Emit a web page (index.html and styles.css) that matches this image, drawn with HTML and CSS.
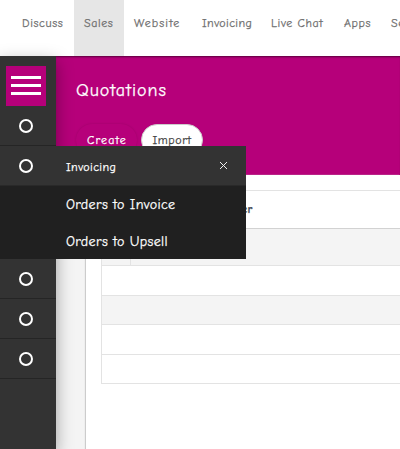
FILE: index.html
```
<!DOCTYPE html>
<html lang="en">
<head>
<meta charset="utf-8">
<title>Quotations</title>
<link rel="stylesheet" href="styles.css">
</head>
<body>
<nav class="topbar">
  <a class="tab discuss">Discuss</a>
  <a class="tab sales active">Sales</a>
  <a class="tab website">Website</a>
  <a class="tab invoicing">Invoicing</a>
  <a class="tab chat">Live Chat</a>
  <a class="tab apps">Apps</a>
  <a class="tab settings">Settings</a>
</nav>
<div class="body">
  <aside class="sidebar">
    <div class="toggle"><i></i><i></i><i></i></div>
    <div class="item"><span class="ring"></span></div>
    <section class="flyout">
      <header class="flyout-head">
        <span class="ring"></span>
        <span class="flyout-title">Invoicing</span>
        <svg class="close" viewBox="0 0 9 9"><path d="M1 1l7 7M8 1L1 8"/></svg>
      </header>
      <a class="entry">Orders to Invoice</a>
      <a class="entry">Orders to Upsell</a>
    </section>
    <div class="item"><span class="ring"></span></div>
    <div class="item"><span class="ring"></span></div>
    <div class="item"><span class="ring"></span></div>
  </aside>
  <main class="main">
    <header class="control">
      <h1>Quotations</h1>
      <div class="buttons">
        <button class="btn create">Create</button>
        <button class="btn import">Import</button>
      </div>
    </header>
    <div class="content">
      <div class="sheet">
        <div class="table">
          <div class="row head"><b>Customer</b></div>
          <div class="row first"><span class="check"></span></div>
          <div class="row"></div>
          <div class="row shaded"></div>
          <div class="row"></div>
          <div class="row last"></div>
        </div>
      </div>
    </div>
  </main>
</div>
</body>
</html>
```
FILE: styles.css
```
* { box-sizing: border-box; }
body {
  margin: 0;
  width: 400px;
  height: 449px;
  overflow: hidden;
  background: #fff;
  font: 12px "Comic Sans MS", "Comic Neue", Lato, sans-serif;
  letter-spacing: .4px;
  -webkit-text-stroke: .25px currentColor;
}
.topbar {
  display: flex;
  height: 56px;
  padding-left: 12px;
  overflow: hidden;
}
.tab {
  flex: none;
  height: 56px;
  padding: 0 10px;
  line-height: 46px;
  color: #6f6f6f;
  letter-spacing: .6px;
  white-space: nowrap;
}
.active { background: #e6e6e6; }
.discuss { width: 62px; }
.sales { width: 50px; }
.website { width: 68px; letter-spacing: 1.1px; }
.invoicing { width: 69px; letter-spacing: .4px; }
.chat { width: 73px; }
.apps { width: 47px; }
.settings { width: 70px; }
.body { display: flex; height: 393px; }
.sidebar {
  position: relative;
  z-index: 2;
  flex: none;
  width: 56px;
  padding-top: 10px;
  background: #333;
  box-shadow: 0 6px 16px rgba(0, 0, 0, .35);
}
.toggle {
  display: flex;
  flex-direction: column;
  gap: 5px;
  width: 40px;
  height: 40px;
  margin-left: 6px;
  padding: 10px 5px;
  background: #b6007a;
}
.toggle i { height: 3px; background: #fff; }
.item {
  height: 40px;
  padding: 13px 0 0 19px;
  border-bottom: 1px solid #252525;
}
.ring {
  display: block;
  flex: none;
  width: 14px;
  height: 14px;
  border: 2px solid #fff;
  border-radius: 50%;
}
.flyout {
  width: 246px;
  height: 113px;
  background: #202020;
  color: #fff;
}
.flyout-head {
  display: flex;
  align-items: center;
  height: 40px;
  padding: 0 18px 0 19px;
  background: #333;
  border-bottom: 1px solid #292929;
}
.flyout-title { margin-left: 33px; padding-top: 2px; }
.close {
  width: 9px;
  height: 9px;
  margin-left: auto;
  fill: none;
  stroke: #eee;
  stroke-width: 1;
}
.entry {
  display: block;
  height: 37px;
  padding-left: 66px;
  font-size: 14px;
  letter-spacing: .35px;
  line-height: 37px;
}
.main { width: 344px; display: flex; flex-direction: column; }
.control {
  flex: none;
  height: 119px;
  padding: 20px 0 0 20px;
  background: #b6007a;
  box-shadow: inset 0 2px 2px -1px rgba(0, 0, 0, .5);
  color: #fff;
}
h1 {
  margin: 0;
  height: 48px;
  font-size: 18px;
  font-weight: 400;
  letter-spacing: .95px;
  line-height: 29px;
}
.buttons { display: flex; gap: 4px; }
.btn {
  height: 32px;
  padding: 0 10px;
  border: 1px solid transparent;
  border-radius: 16px;
  font: inherit;
  letter-spacing: .6px;
  white-space: nowrap;
}
.create {
  width: 61px;
  background: #b6007a;
  color: #fff;
  letter-spacing: 1.1px;
  box-shadow: 0 0 2px rgba(80, 0, 50, .25);
}
.import { width: 62px; background: #fff; border-color: #ccc; color: #444; }
.content { flex: 1; padding-left: 30px; background: #f4f4f4; }
.sheet {
  height: 274px;
  padding: 15px 0 0 15px;
  background: #fff;
  box-shadow: -1px 0 1px #ccc;
}
.table { border: solid #e3e3e3; border-width: 1px 0 0 1px; }
.row { height: 30px; border-bottom: 1px solid #e3e3e3; background: #fff; }
.head {
  height: 38px;
  border-color: #d2d2d2;
  padding-left: 99px;
  line-height: 37px;
  color: #444a55;
}
.first { height: 37px; background: #f4f4f4; }
.check { display: block; width: 29px; height: 36px; border-right: 1px solid #e3e3e3; }
.shaded { height: 29px; background: #f4f4f4; }
.last { height: 29px; }
```
